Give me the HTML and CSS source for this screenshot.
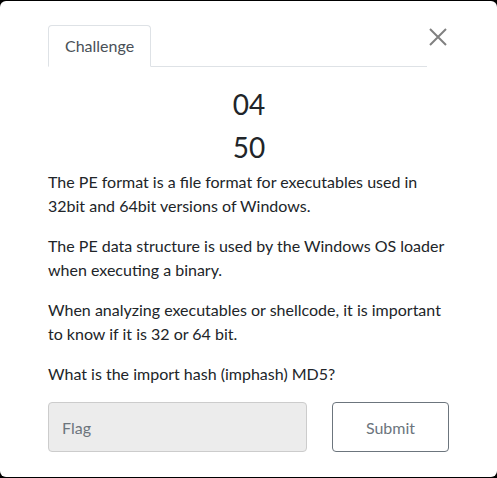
FILE: index.html
```html
<!DOCTYPE html>
<html>
<head>
<meta charset="utf-8">
<link rel="stylesheet" href="styles.css">
</head>
<body>
<div class="modal">
  <div class="header">
    <ul class="tabs">
      <li class="tab">Challenge</li>
    </ul>
    <button class="close" aria-label="Close">
      <svg width="18" height="18" viewBox="0 0 18 18"><path d="M1 1L17 17M17 1L1 17" stroke="#808080" stroke-width="2" fill="none"/></svg>
    </button>
  </div>
  <div class="body">
    <h2 class="cat">04</h2>
    <h2 class="points">50</h2>
    <div class="desc">
      <p>The PE format is a file format for executables used in 32bit and 64bit versions of Windows.</p>
      <p>The PE data structure is used by the Windows OS loader when executing a binary.</p>
      <p>When analyzing executables or shellcode, it is important to know if it is 32 or 64 bit.</p>
      <p>What is the import hash (imphash) MD5?</p>
    </div>
    <form class="submit-row">
      <input class="flag" type="text" placeholder="Flag">
      <button type="button" class="btn">Submit</button>
    </form>
  </div>
</div>
</body>
</html>
```
FILE: styles.css
```css
* { box-sizing: border-box; }
html, body { margin: 0; padding: 0; }
body {
  background: #000;
  font-family: Lato, "Open Sans", sans-serif;
  color: #212529;
  width: 497px;
  height: 478px;
  overflow: hidden;
}
.modal {
  margin-top: 1px;
  height: 476px;
  background: #fff;
  border-radius: 6px;
  padding: 24px 47px 0 48px;
}
.header {
  display: flex;
  align-items: flex-start;
}
.tabs {
  list-style: none;
  margin: 0;
  padding: 0;
  display: flex;
  flex: 1;
  border-bottom: 1px solid #dee2e6;
  margin-right: 2px;
}
.tab {
  font-size: 16px;
  line-height: 24px;
  padding: 8px 16px;
  color: #495057;
  border: 1px solid #dee2e6;
  border-bottom-color: #fff;
  border-radius: 4px 4px 0 0;
  margin-bottom: -1px;
  background: #fff;
}
.close {
  background: none;
  border: 0;
  padding: 0;
  margin: 3px 3px 0 0;
  width: 18px;
  height: 18px;
  display: flex;
  cursor: pointer;
}
.body { display: flex; flex-direction: column; }
.cat, .points {
  margin: 0;
  text-align: center;
  font-weight: 400;
  font-size: 28px;
  line-height: 43px;
}
.cat { margin-top: 16px; }
.desc { margin-top: 1px; }
.desc p {
  margin: 0 0 16px;
  font-size: 16px;
  line-height: 24px;
}
.submit-row {
  display: flex;
  gap: 25px;
  margin-top: 0;
}
.flag {
  width: 259px;
  height: 50px;
  background: #ececec;
  border: 1px solid #ccc;
  border-radius: 4px;
  padding: 0 13px;
  font-family: Lato, sans-serif;
  font-size: 16px;
  color: #495057;
}
.flag::placeholder { color: #6c757d; }
.btn {
  width: 117px;
  height: 50px;
  background: #fff;
  border: 1px solid #6c757d;
  border-radius: 4px;
  font-family: Lato, sans-serif;
  font-size: 16px;
  color: #6c757d;
}
```
